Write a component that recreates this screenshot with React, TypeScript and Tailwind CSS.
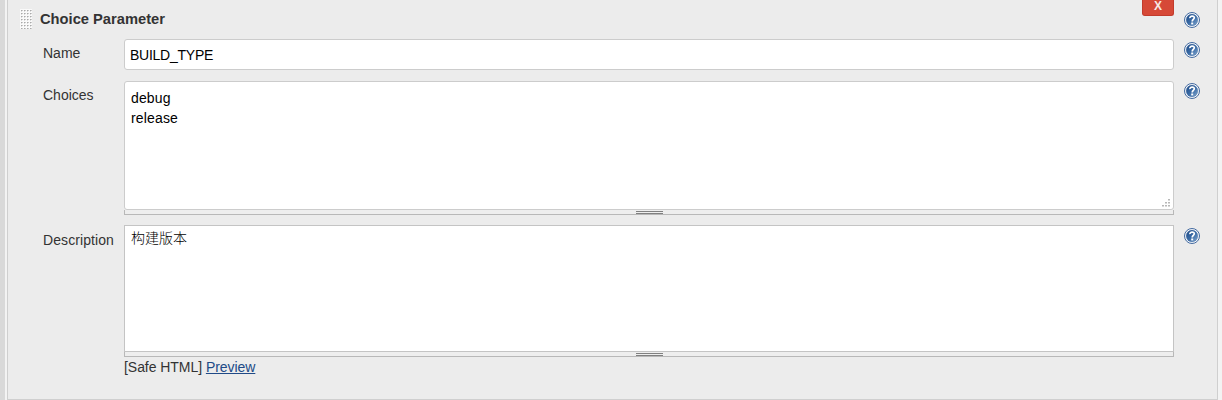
import type { ReactNode } from "react";

function HelpIcon() {
  return (
    <svg width="16" height="16" viewBox="0 0 16 16" className="block shrink-0" aria-label="Help">
      <defs>
        <linearGradient id="helpFill" x1="0" y1="0" x2="1" y2="1">
          <stop offset="0" stopColor="#1f4a85" />
          <stop offset="0.5" stopColor="#386aa5" />
          <stop offset="1" stopColor="#86a9cf" />
        </linearGradient>
      </defs>
      <circle cx="8" cy="8" r="7.5" fill="#fff" stroke="#42699f" strokeWidth="1" />
      <circle cx="8" cy="8" r="5.9" fill="url(#helpFill)" stroke="#3c659b" strokeWidth="0.3" />
      <path d="M5.9 6.1C5.8 3.4 10.4 3.4 10.3 5.8C10.2 7.3 8.2 7.6 8.2 9.5" fill="none" stroke="#fff" strokeWidth="1.7" />
      <rect x="7.2" y="10.5" width="2" height="1.9" fill="#fff" />
    </svg>
  );
}

function DragGrip() {
  return (
    <svg width="12" height="20" className="block shrink-0">
      <defs>
        <pattern id="gripDots" width="3" height="3" patternUnits="userSpaceOnUse">
          <rect width="3" height="3" fill="#fafafa" />
          <rect x="1" y="1" width="1" height="1" fill="#aaa" />
          <rect x="2" y="1" width="1" height="1" fill="#ccc" />
          <rect x="1" y="2" width="1" height="1" fill="#ddd" />
        </pattern>
      </defs>
      <rect width="12" height="20" fill="url(#gripDots)" />
    </svg>
  );
}

function ResizeCorner() {
  return (
    <svg width="8" height="8" className="absolute right-[3px] bottom-[2px]" fill="#b8b8b8">
      <path d="M6 0h2v1h-2zM3 3h2v1h-2zM6 3h2v1h-2zM0 6h2v1h-2zM3 6h2v1h-2zM6 6h2v1h-2z" />
      <path d="M6 1h2v1h-2zM3 4h2v1h-2zM6 4h2v1h-2zM0 7h2v1h-2zM3 7h2v1h-2zM6 7h2v1h-2z" opacity=".5" />
    </svg>
  );
}

function ResizeHandle() {
  return (
    <div className="flex h-[5px] justify-center border-x border-b border-[#b8b8b8] bg-[#eeeeee] pt-px">
      <div className="h-[3px] w-[27px] border-y border-[#808080] bg-[#eeeeee]" />
    </div>
  );
}

type RowProps = { label: string; children: ReactNode; className?: string; labelClass?: string; helpClass?: string };

function Row({ label, children, className = "", labelClass = "pt-1", helpClass = "pt-[3px]" }: RowProps) {
  return (
    <div className={`flex items-start ${className}`}>
      <div className={`w-[81px] shrink-0 leading-5 ${labelClass}`}>{label}</div>
      <div className="w-[1050px] shrink-0">{children}</div>
      <div className={`ml-[10px] ${helpClass}`}>
        <HelpIcon />
      </div>
    </div>
  );
}

export default function App() {
  return (
    <div className="flex h-[400px] w-[1222px] overflow-hidden bg-[#f3f3f3] font-['Liberation_Sans','Noto_Sans_CJK_SC',sans-serif] text-[14px] leading-5 text-[#333]">
      <div className="w-[5px] shrink-0 bg-[#d9d9d9]" />
      <div className="ml-[2px] h-[400px] w-[1211px] shrink-0 border-x border-b border-[#cfcfcf] bg-[#ececec]">
        <div className="flex h-[39px] items-start pl-3">
          <div className="pt-[9px]">
            <DragGrip />
          </div>
          <div className="w-[1110px] shrink-0 pt-[9px] pl-2 text-[14.7px] leading-5 font-bold">Choice Parameter</div>
          <button className="h-4 w-8 shrink-0 rounded-b-[3px] border-x border-b border-[#c23b2c] bg-[#d64937] pb-1 text-[12px] leading-3 font-bold text-[#f8e8e5]">
            X
          </button>
          <div className="pt-3 pl-[10px]">
            <HelpIcon />
          </div>
        </div>

        <div className="pl-[35px]">
          <Row label="Name" className="h-[42px]">
            <div className="h-[31px] rounded-[3px] border border-[#ccc] bg-white pt-[5px] pl-[5px] leading-5 tracking-[-0.25px] text-black">
              BUILD_TYPE
            </div>
          </Row>
          <Row label="Choices" className="h-[144px]" helpClass="pt-[2px]">
            <div className="relative h-[129px] rounded-[3px] border border-[#ccc] bg-white pt-[6px] pl-[6px] leading-5 tracking-[0.15px] whitespace-pre text-black">
              {"debug\nrelease"}
              <ResizeCorner />
            </div>
            <ResizeHandle />
          </Row>
          <Row label="Description" labelClass="pt-[5px] tracking-[0.08px]">
            <div className="h-[127px] border border-[#c4c4c4] bg-white pt-[2px] pl-[6px] leading-5 font-light text-black">
              构建版本
            </div>
            <ResizeHandle />
            <div className="leading-5 tracking-[-0.05px]">
              [Safe HTML] <a className="text-[#204a87] underline">Preview</a>
            </div>
          </Row>
        </div>
      </div>
    </div>
  );
}
